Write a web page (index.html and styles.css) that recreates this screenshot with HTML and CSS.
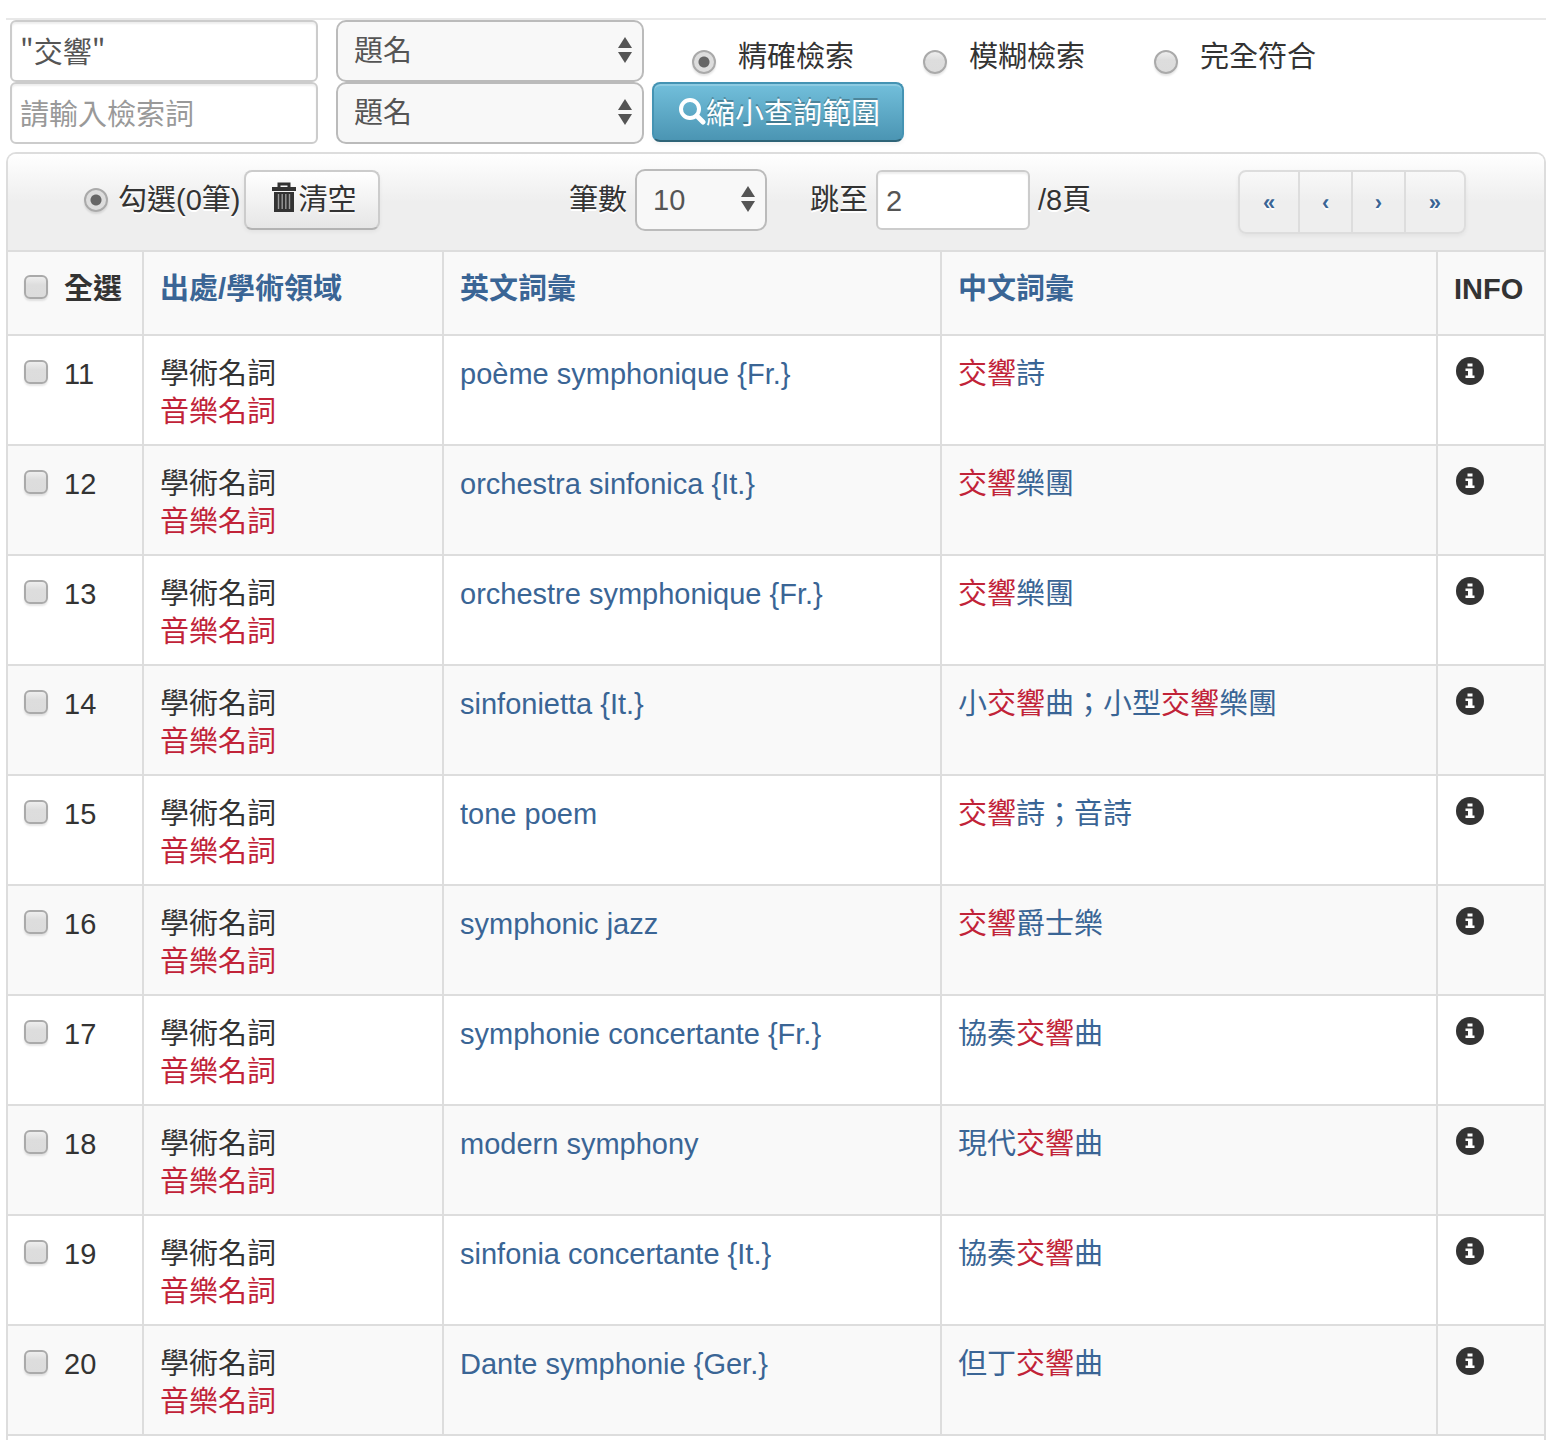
FILE: index.html
```html
<!DOCTYPE html>
<html lang="zh-Hant">
<head>
    <meta charset="UTF-8">
    <meta name="viewport" content="width=device-width, initial-scale=1.0">
    <title>交響 - 檢索結果</title>

    <link rel="stylesheet" href="styles.css">

</head>
<body>
    <svg class="sprite" aria-hidden="true">
        <symbol id="icon-info" viewBox="0 0 28 28">
            <circle cx="14" cy="14" r="14" fill="#333"/>
            <path d="M11.5 6.5h5v3h-5zM9.5 11.5h7v7h2v2.5h-9v-2.5h2.5V14H9.5z" fill="#fff"/>
        </symbol>
    </svg>

    <form class="search">
        <div class="search-row">
            <input class="text-box keyword" type="text" value="&quot;交響&quot;" aria-label="檢索詞">
            <span class="select-box field">
                <select aria-label="檢索欄位"><option>題名</option></select>
            </span>
            <div class="modes">
                <label><input class="tick round" type="radio" name="mode" checked>精確檢索</label>
                <label><input class="tick round" type="radio" name="mode">模糊檢索</label>
                <label><input class="tick round" type="radio" name="mode">完全符合</label>
            </div>
        </div>
        <div class="search-row">
            <input class="text-box keyword" type="text" placeholder="請輸入檢索詞" aria-label="檢索詞">
            <span class="select-box field">
                <select aria-label="檢索欄位"><option>題名</option></select>
            </span>
            <button class="btn btn-info" type="submit">
                <svg class="icon" viewBox="0 0 28 28"><circle cx="12" cy="11" r="9" fill="none" stroke="#fff" stroke-width="4"/><path d="M19 18l6 6" stroke="#fff" stroke-width="5" stroke-linecap="round"/></svg>縮小查詢範圍
            </button>
        </div>
    </form>

    <div class="panel">
        <div class="toolbar">
            <div class="tool selection">
                <label class="picked"><input class="tick round" type="radio" name="range" checked>勾選(0筆)</label>
                <button class="btn" type="button">
                    <svg class="icon" viewBox="0 0 28 32"><path d="M9 6V2h10v4" fill="none" stroke="#333" stroke-width="3"/><path d="M2 5h24v4H2z" fill="#333"/><path d="M4 10h20v20H4z" fill="#333"/><path d="M8.5 12v15M12.2 12v15M15.8 12v15M19.5 12v15" stroke="#999" stroke-width="1.4"/></svg>清空
                </button>
            </div>
            <div class="tool">
                <label for="count">筆數</label>
                <span class="select-box count">
                    <select id="count"><option>10</option></select>
                </span>
            </div>
            <div class="tool">
                <label for="page">跳至</label>
                <input class="text-box page" id="page" type="text" value="2">
                <span>/8頁</span>
            </div>
            <ul class="pagination">
                <li><a href="#">«</a></li>
                <li><a href="#">‹</a></li>
                <li><a href="#">›</a></li>
                <li><a href="#">»</a></li>
            </ul>
        </div>

        <table class="results">
            <colgroup>
                <col class="col-no">
                <col class="col-source">
                <col class="col-english">
                <col>
                <col class="col-info">
            </colgroup>
            <thead>
                <tr>
                    <th><label><input class="tick" type="checkbox">全選</label></th>
                    <th><a href="#">出處/學術領域</a></th>
                    <th><a href="#">英文詞彙</a></th>
                    <th><a href="#">中文詞彙</a></th>
                    <th>INFO</th>
                </tr>
            </thead>
            <tbody>
                <tr>
                    <td><label><input class="tick" type="checkbox">11</label></td>
                    <td>學術名詞<br><em>音樂名詞</em></td>
                    <td><a href="#">poème symphonique {Fr.}</a></td>
                    <td><a href="#"><em>交響</em>詩</a></td>
                    <td><a class="info" href="#" aria-label="INFO"><svg><use href="#icon-info"/></svg></a></td>
                </tr>
                <tr>
                    <td><label><input class="tick" type="checkbox">12</label></td>
                    <td>學術名詞<br><em>音樂名詞</em></td>
                    <td><a href="#">orchestra sinfonica {It.}</a></td>
                    <td><a href="#"><em>交響</em>樂團</a></td>
                    <td><a class="info" href="#" aria-label="INFO"><svg><use href="#icon-info"/></svg></a></td>
                </tr>
                <tr>
                    <td><label><input class="tick" type="checkbox">13</label></td>
                    <td>學術名詞<br><em>音樂名詞</em></td>
                    <td><a href="#">orchestre symphonique {Fr.}</a></td>
                    <td><a href="#"><em>交響</em>樂團</a></td>
                    <td><a class="info" href="#" aria-label="INFO"><svg><use href="#icon-info"/></svg></a></td>
                </tr>
                <tr>
                    <td><label><input class="tick" type="checkbox">14</label></td>
                    <td>學術名詞<br><em>音樂名詞</em></td>
                    <td><a href="#">sinfonietta {It.}</a></td>
                    <td><a href="#">小<em>交響</em>曲；小型<em>交響</em>樂團</a></td>
                    <td><a class="info" href="#" aria-label="INFO"><svg><use href="#icon-info"/></svg></a></td>
                </tr>
                <tr>
                    <td><label><input class="tick" type="checkbox">15</label></td>
                    <td>學術名詞<br><em>音樂名詞</em></td>
                    <td><a href="#">tone poem</a></td>
                    <td><a href="#"><em>交響</em>詩；音詩</a></td>
                    <td><a class="info" href="#" aria-label="INFO"><svg><use href="#icon-info"/></svg></a></td>
                </tr>
                <tr>
                    <td><label><input class="tick" type="checkbox">16</label></td>
                    <td>學術名詞<br><em>音樂名詞</em></td>
                    <td><a href="#">symphonic jazz</a></td>
                    <td><a href="#"><em>交響</em>爵士樂</a></td>
                    <td><a class="info" href="#" aria-label="INFO"><svg><use href="#icon-info"/></svg></a></td>
                </tr>
                <tr>
                    <td><label><input class="tick" type="checkbox">17</label></td>
                    <td>學術名詞<br><em>音樂名詞</em></td>
                    <td><a href="#">symphonie concertante {Fr.}</a></td>
                    <td><a href="#">協奏<em>交響</em>曲</a></td>
                    <td><a class="info" href="#" aria-label="INFO"><svg><use href="#icon-info"/></svg></a></td>
                </tr>
                <tr>
                    <td><label><input class="tick" type="checkbox">18</label></td>
                    <td>學術名詞<br><em>音樂名詞</em></td>
                    <td><a href="#">modern symphony</a></td>
                    <td><a href="#">現代<em>交響</em>曲</a></td>
                    <td><a class="info" href="#" aria-label="INFO"><svg><use href="#icon-info"/></svg></a></td>
                </tr>
                <tr>
                    <td><label><input class="tick" type="checkbox">19</label></td>
                    <td>學術名詞<br><em>音樂名詞</em></td>
                    <td><a href="#">sinfonia concertante {It.}</a></td>
                    <td><a href="#">協奏<em>交響</em>曲</a></td>
                    <td><a class="info" href="#" aria-label="INFO"><svg><use href="#icon-info"/></svg></a></td>
                </tr>
                <tr>
                    <td><label><input class="tick" type="checkbox">20</label></td>
                    <td>學術名詞<br><em>音樂名詞</em></td>
                    <td><a href="#">Dante symphonie {Ger.}</a></td>
                    <td><a href="#">但丁<em>交響</em>曲</a></td>
                    <td><a class="info" href="#" aria-label="INFO"><svg><use href="#icon-info"/></svg></a></td>
                </tr>
            </tbody>
        </table>
    </div>
</body>
</html>
```
FILE: styles.css
```css
*{
    box-sizing: border-box;
}

body{
    margin: 0;
    padding: 18px 14px 0 6px;
    background-color: white;
    color: #333;
    font-family: "Liberation Sans", "Noto Sans CJK TC", sans-serif;
    font-size: 29px;
    line-height: 38px;
}

input,
select,
button{
    margin: 0;
    font: inherit;
}

a{
    color: #3a6595;
    text-decoration: none;
}

em{
    color: #c12338;
    font-style: normal;
}

.sprite{
    display: none;
}

/* form controls */

.text-box{
    height: 60px;
    padding: 2px 8px 0;
    border: 2px solid #ccc;
    border-radius: 6px;
    background-color: white;
    box-shadow: inset 0 2px 2px rgba(0,0,0,0.07);
    color: #555;
}

.text-box::placeholder{
    color: #999;
    opacity: 1;
}

.select-box{
    position: relative;
    height: 62px;
}

.select-box select{
    appearance: none;
    width: 100%;
    height: 100%;
    padding: 0 16px;
    border: 2px solid #bbb;
    border-radius: 10px;
    background-color: #f8f8f8;
    color: #555;
}

.select-box::before,
.select-box::after{
    content: "";
    position: absolute;
    right: 12px;
    border-left: 7px solid transparent;
    border-right: 7px solid transparent;
    pointer-events: none;
}

.select-box::before{
    top: 17px;
    border-bottom: 11px solid #555;
}

.select-box::after{
    bottom: 19px;
    border-top: 11px solid #555;
}

.tick{
    appearance: none;
    flex: none;
    width: 24px;
    height: 24px;
    border: 2px solid #aaa;
    border-radius: 6px;
    background-image: linear-gradient(#eee, #ddd 40%, #dcdcdc);
    box-shadow: 0 2px 2px rgba(0,0,0,0.1);
}

.round{
    border-radius: 50%;
}

.round:checked{
    background-image: radial-gradient(circle, #666 5px, #ddd 6px);
}

.btn{
    display: flex;
    align-items: center;
    height: 60px;
    padding: 0 22px 0 24px;
    border: 2px solid #ccc;
    border-bottom-color: #b3b3b3;
    border-radius: 8px;
    background-image: linear-gradient(#fff, #e6e6e6);
    box-shadow: inset 0 2px 0 rgba(255,255,255,0.2), 0 2px 4px rgba(0,0,0,0.05);
    color: #333;
    text-shadow: 0 2px 2px rgba(255,255,255,0.75);
    white-space: nowrap;
}

.btn-info{
    padding-top: 4px;
    border-color: #4493b3 #4493b3 #2f6478;
    background-image: linear-gradient(#72bfdb, #4b95b3);
    color: white;
    text-shadow: 0 -2px 0 rgba(0,0,0,0.25);
}

.icon{
    flex: none;
    width: 28px;
    height: 32px;
    margin-bottom: 4px;
}

/* search form */

.search{
    padding: 0 4px 8px;
    border-top: 2px solid #e8e8e8;
}

.search-row{
    display: flex;
    align-items: flex-start;
    height: 62px;
}

.keyword{
    width: 308px;
    height: 62px;
    margin-right: 18px;
    padding: 0 8px 2px;
    font-family: "Noto Sans CJK TC", sans-serif;
}

.field{
    width: 308px;
    margin-right: 8px;
}

.modes{
    display: flex;
    padding: 18px 0 0 40px;
}

.modes label{
    display: flex;
    gap: 22px;
    width: 231px;
}

.modes .tick{
    margin-top: 12px;
}

/* result panel */

.panel{
    border: 2px solid #ddd;
    border-bottom: 0;
    border-radius: 10px 10px 0 0;
    padding-bottom: 4px;
}

.toolbar{
    display: grid;
    grid-template-columns: 485fr 241fr 428fr 228px;
    height: 98px;
    padding: 16px 78px 0 76px;
    border-bottom: 2px solid #ddd;
    border-radius: 8px 8px 0 0;
    background-image: linear-gradient(#fff, #eee 50%, #eee);
    text-shadow: 0 2px 0 white;
}

.tool{
    display: flex;
    align-items: center;
    gap: 8px;
    height: 60px;
}

.selection{
    gap: 4px;
}

.picked{
    display: flex;
    align-items: center;
    gap: 10px;
}

.count{
    width: 132px;
}

.page{
    width: 154px;
}

.pagination{
    display: flex;
    height: 64px;
    margin: 0;
    padding: 0;
    border: 2px solid #ddd;
    border-radius: 8px;
    box-shadow: 0 2px 4px rgba(0,0,0,0.05);
    list-style: none;
}

.pagination li{
    flex: 52;
    border-left: 2px solid #ddd;
}

.pagination li:first-child{
    border-left: 0;
}

.pagination li:first-child,
.pagination li:last-child{
    flex: 60;
}

.pagination a{
    display: block;
    font-size: 22px;
    font-weight: bold;
    line-height: 62px;
    text-align: center;
}

/* result table */

.results{
    width: 100%;
    border-spacing: 0;
    table-layout: fixed;
}

.col-no{
    width: 134px;
}

.col-source{
    width: 300px;
}

.col-english{
    width: 498px;
}

.col-info{
    width: 108px;
}

.results th,
.results td{
    padding: 19px 16px 13px;
    border-bottom: 2px solid #ddd;
    border-left: 2px solid #ddd;
    text-align: left;
    vertical-align: top;
}

.results th:first-child,
.results td:first-child{
    border-left: 0;
}

.results th{
    padding-top: 18px;
    padding-bottom: 26px;
    background-color: #f9f9f9;
}

.results tbody tr:nth-child(even) td{
    background-color: #f9f9f9;
}

.results label{
    display: flex;
    gap: 16px;
}

.results .tick{
    margin-top: 5px;
}

.info{
    display: flex;
    align-items: center;
    height: 32px;
    padding-left: 2px;
}

.info svg{
    width: 28px;
    height: 28px;
}
```
